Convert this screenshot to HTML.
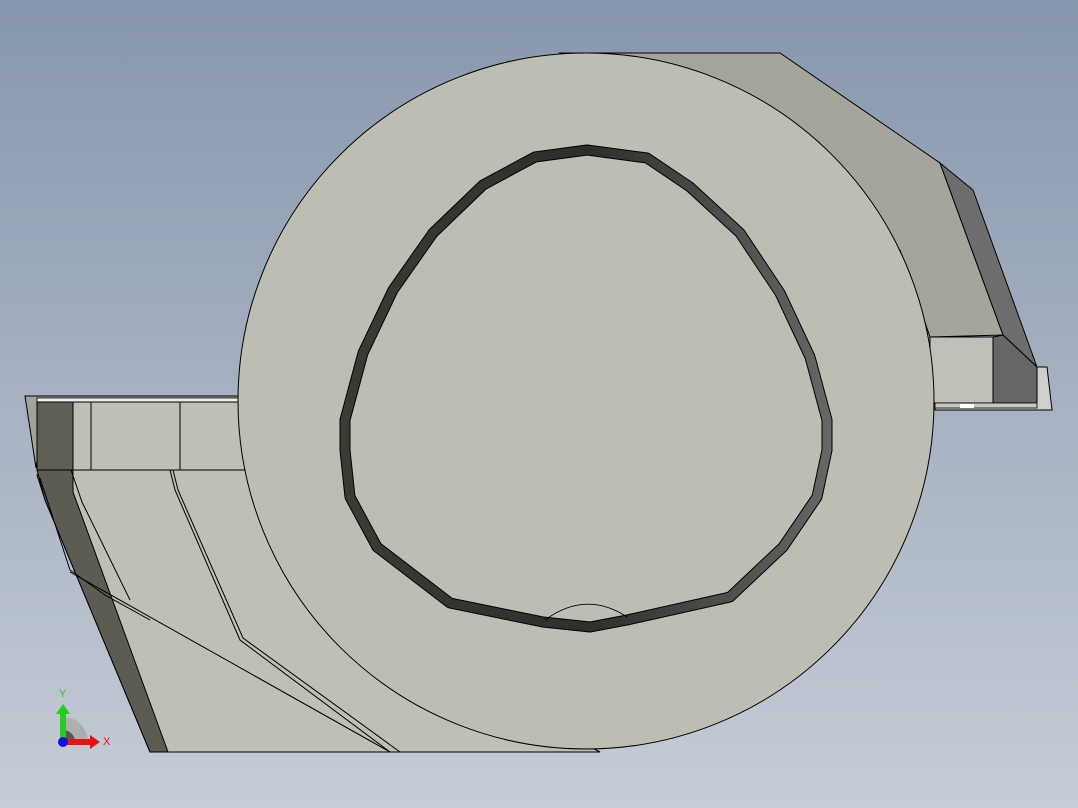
<!DOCTYPE html>
<html><head><meta charset="utf-8"><style>
html,body{margin:0;padding:0;width:1078px;height:808px;overflow:hidden}
svg{display:block}
</style></head><body>
<svg width="1078" height="808" viewBox="0 0 1078 808" xmlns="http://www.w3.org/2000/svg">
<defs>
<linearGradient id="bg" x1="0" y1="0" x2="0" y2="1">
<stop offset="0" stop-color="#8797ad"/><stop offset="1" stop-color="#c6ccd7"/>
</linearGradient>
<linearGradient id="ring" x1="0" y1="0" x2="1" y2="0">
<stop offset="0" stop-color="#3b3b35"/><stop offset="0.5" stop-color="#2e2e2b"/><stop offset="1" stop-color="#666"/>
</linearGradient>
</defs>
<rect width="1078" height="808" fill="url(#bg)"/>
<!-- right housing -->
<polygon points="560,53 780,53 940,163 1003,335 930,337 900,250" fill="#a5a59b" stroke="#000" stroke-width="1"/>
<polygon points="940,163 973,190 1037,367 1003,335" fill="#6d6d6d" stroke="#000" stroke-width="1"/>
<polygon points="1037,367 1047,367 1052,410 935,410 935,403 1037,403" fill="#cfcfcc" stroke="#000" stroke-width="1"/>
<rect x="930" y="337" width="63" height="66" fill="#c0c0b8" stroke="#000" stroke-width="1"/>
<polygon points="993,337 1003,335 1037,367 1037,403 993,403" fill="#666" stroke="#000" stroke-width="1"/>
<rect x="935" y="403" width="102" height="5" fill="#c8c8c0" stroke="#000" stroke-width="0.8"/>
<rect x="960" y="404" width="14" height="4" fill="#fff"/>
<!-- left flange -->
<polygon points="25,396 240,396 240,402 45,402 36,468" fill="#a3a398" stroke="#000" stroke-width="1"/>
<rect x="37" y="398" width="203" height="4" fill="#eee" stroke="#000" stroke-width="0.8"/>
<rect x="73" y="402" width="180" height="68" fill="#c0bfb5" stroke="#000" stroke-width="1"/>
<rect x="37" y="402" width="36" height="68" fill="#5f5f55" stroke="#000" stroke-width="1"/>
<line x1="91" y1="402" x2="91" y2="470" stroke="#000"/>
<line x1="180" y1="402" x2="180" y2="470" stroke="#000"/>
<!-- left lower chute -->
<polygon points="63,470 300,470 500,700 600,752 150,752 45,500 37,475" fill="#c0bfb5" stroke="#000" stroke-width="1"/>
<polygon points="37,470 73,470 73,492 168,752 150,752 45,500" fill="#5c5c52" stroke="#000" stroke-width="1"/>
<polyline points="71,470 82,502 130,600" fill="none" stroke="#000" stroke-width="1"/>
<polyline points="40,478 70,570 105,595 150,620" fill="none" stroke="#000" stroke-width="1"/>
<line x1="70" y1="572" x2="390" y2="752" stroke="#000" stroke-width="1"/>
<polyline points="170,470 175,490 240,640 390,752" fill="none" stroke="#000" stroke-width="1"/>
<polyline points="173,470 178,490 243,638 400,752" fill="none" stroke="#000" stroke-width="1"/>
<!-- main disc -->
<circle cx="586" cy="401" r="348" fill="#bebdb3" stroke="#000" stroke-width="1"/>
<!-- ring -->
<path d="M587,150 L647,158 L690,187 L740,233 L780,293 L810,357 L827,420 L827,450 L817,497 L783,547 L730,597 L627,620 L590,627 L543,622 L450,603 L377,547 L350,497 L345,450 L345,420 L363,353 L393,290 L433,233 L483,185 L535,157 Z" fill="none" stroke="#000" stroke-width="11" stroke-linejoin="round"/>
<path d="M587,150 L647,158 L690,187 L740,233 L780,293 L810,357 L827,420 L827,450 L817,497 L783,547 L730,597 L627,620 L590,627 L543,622 L450,603 L377,547 L350,497 L345,450 L345,420 L363,353 L393,290 L433,233 L483,185 L535,157 Z" fill="none" stroke="url(#ring)" stroke-width="9" stroke-linejoin="round"/>
<path d="M545,620 Q586,590 627,617" fill="none" stroke="#000" stroke-width="0.8"/>
<!-- axis triad -->
<path d="M63,742 L63,717 A25,25 0 0 1 88,742 Z" fill="#a8a8a8" opacity="0.8"/>
<path d="M63,742 L63,730 A12,12 0 0 1 75,742 Z" fill="#555"/>
<rect x="60" y="712" width="6" height="28" fill="#2c2"/>
<polygon points="56,714 63,704 70,714" fill="#2c2"/>
<rect x="63" y="739" width="28" height="6" fill="#e11"/>
<polygon points="90,735 100,742 90,749" fill="#e11"/>
<circle cx="63" cy="742" r="5" fill="#11d"/>
<text x="59" y="697" font-family="Liberation Sans, sans-serif" font-size="11" fill="#2c2">Y</text>
<text x="103" y="745" font-family="Liberation Sans, sans-serif" font-size="11" fill="#e11">X</text>
</svg>
</body></html>
